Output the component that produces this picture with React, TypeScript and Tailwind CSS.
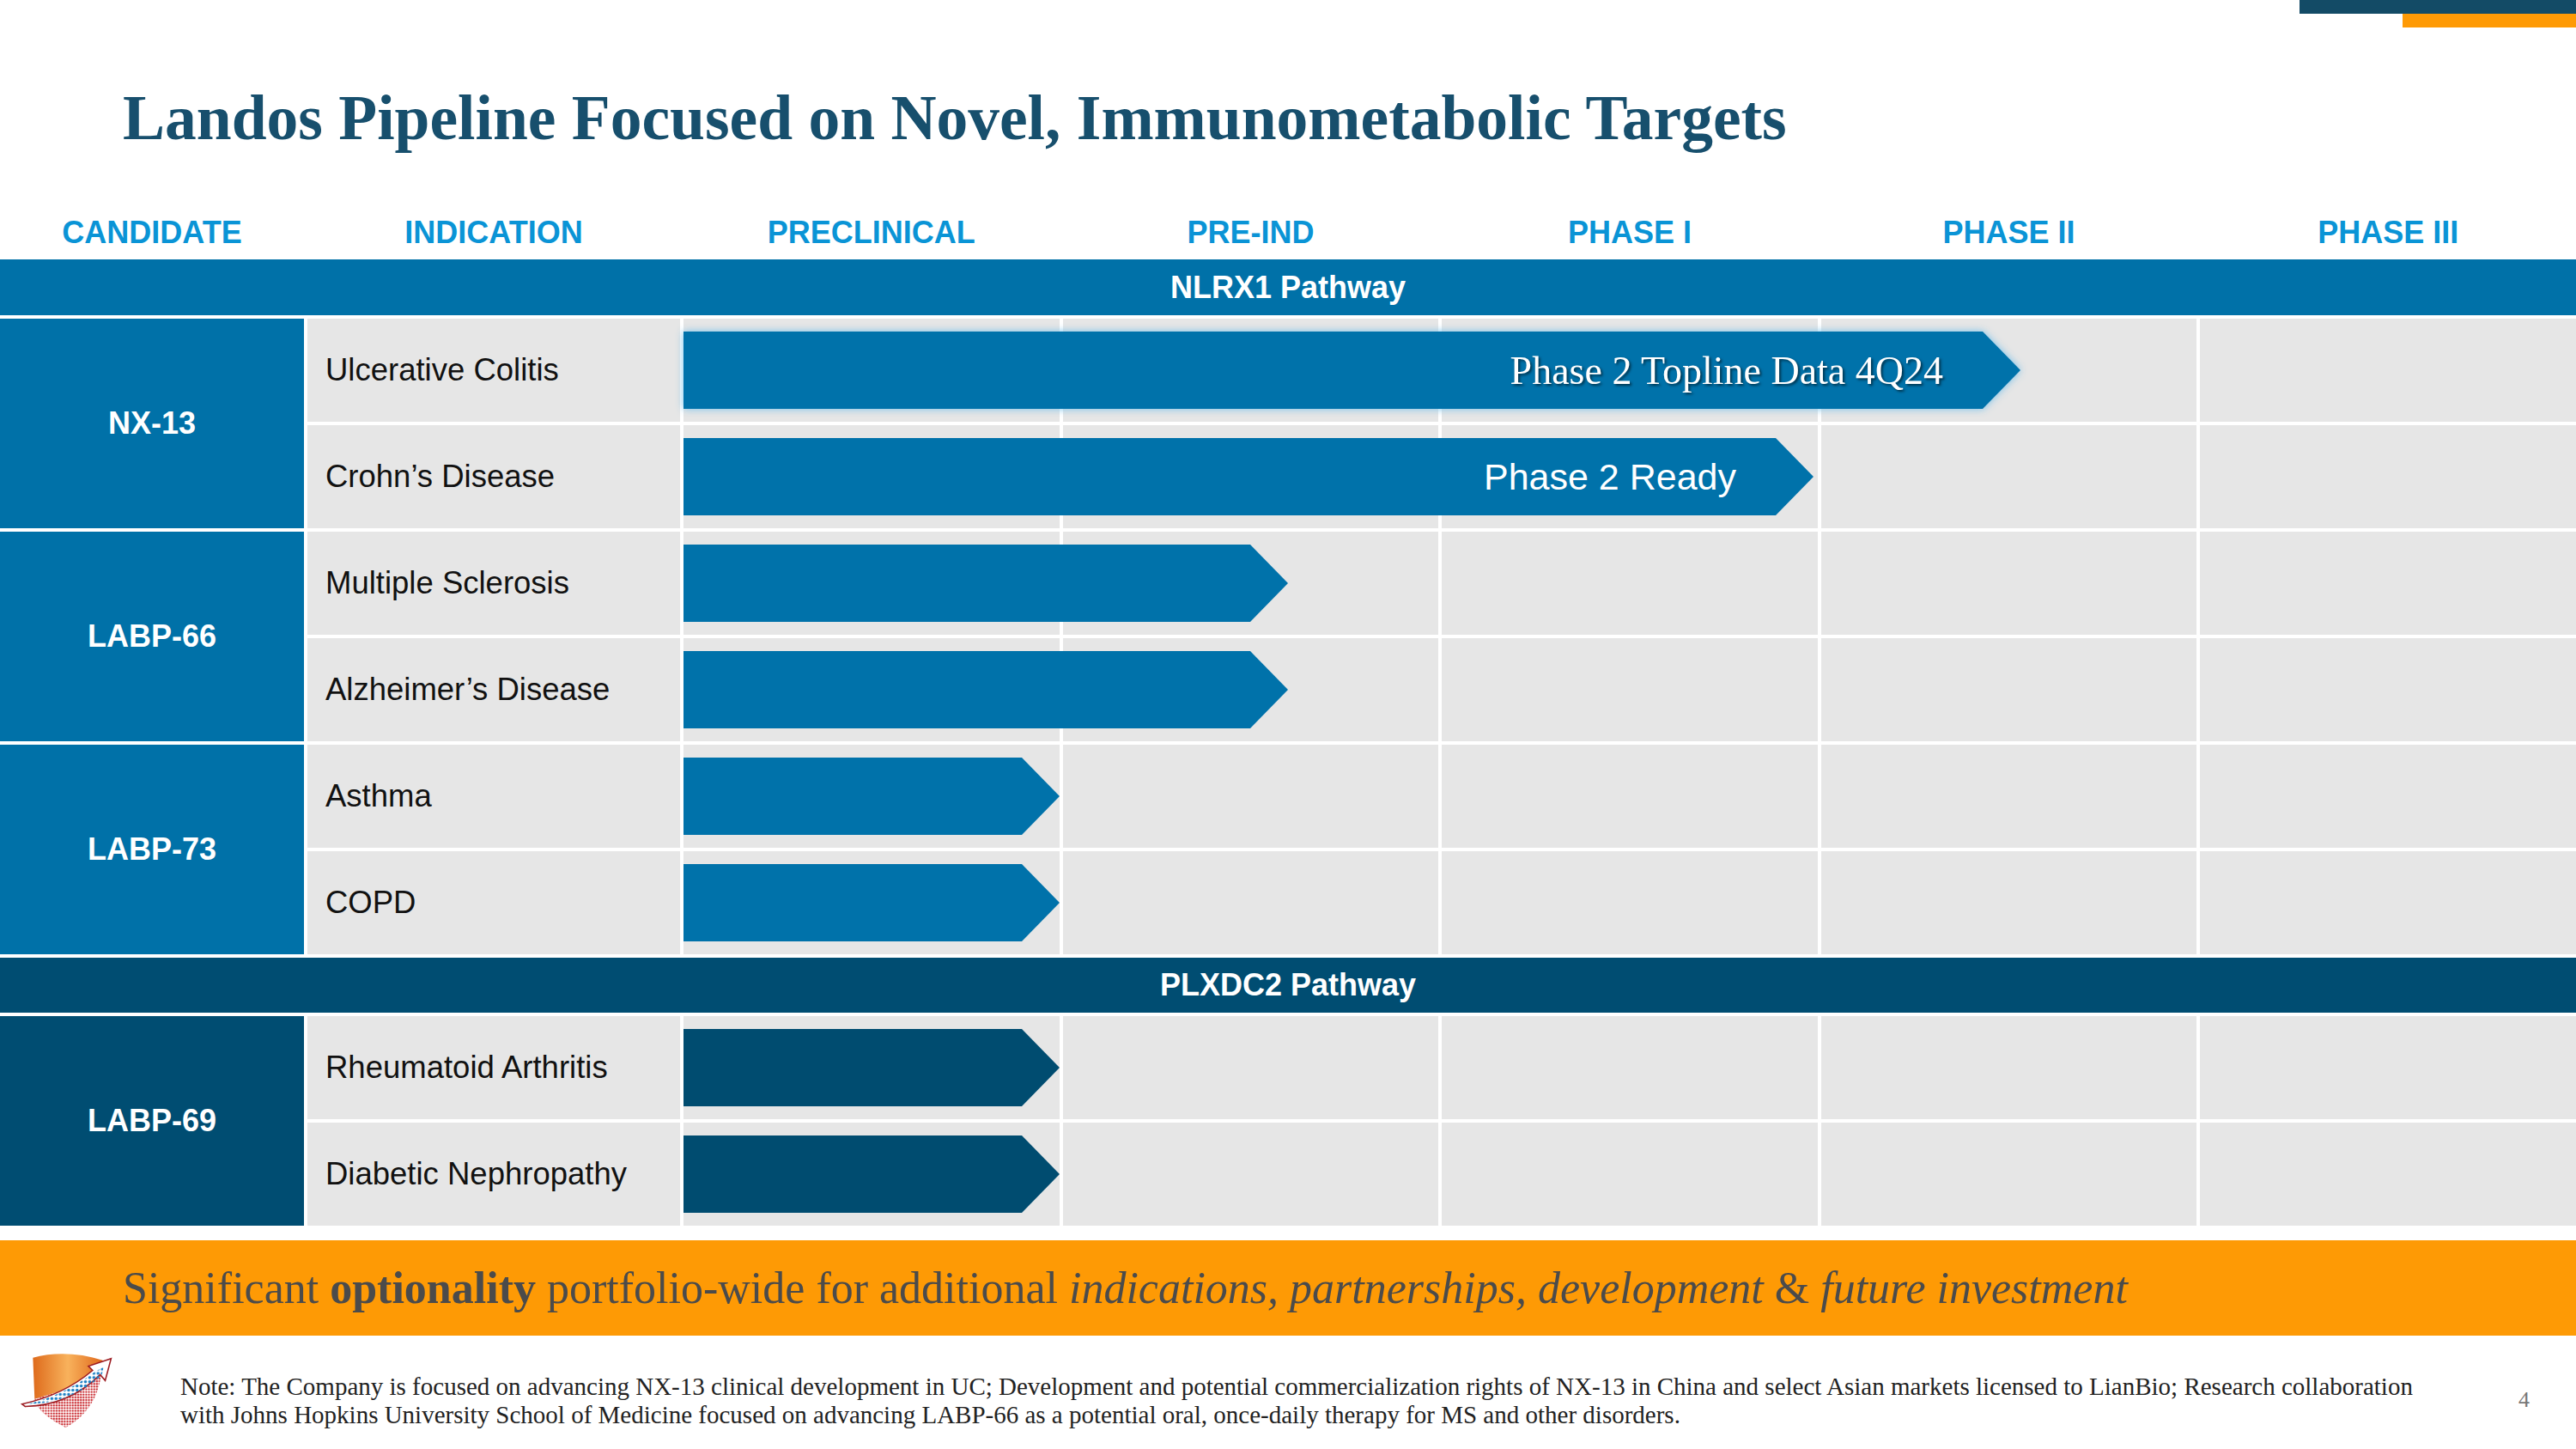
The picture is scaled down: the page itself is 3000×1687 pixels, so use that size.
import React from "react";

type Row = {
  name: string;
  arrow: number; // arrow width in px, measured from the preclinical column start
  label?: string;
  serif?: boolean;
  glow?: boolean;
};

type Group = {
  id: string;
  dark?: boolean;
  rows: Row[];
};

const PHASES = ["PRECLINICAL", "PRE-IND", "PHASE I", "PHASE II", "PHASE III"];

// written out in full so tailwind picks them up
const PHASE_COLS = ["col-start-2", "col-start-3", "col-start-4", "col-start-5", "col-start-6"];

const NLRX1: Group[] = [
  {
    id: "NX-13",
    rows: [
      { name: "Ulcerative Colitis", arrow: 1557, label: "Phase 2 Topline Data 4Q24", serif: true, glow: true },
      { name: "Crohn\u2019s Disease", arrow: 1316, label: "Phase 2 Ready" },
    ],
  },
  {
    id: "LABP-66",
    rows: [
      { name: "Multiple Sclerosis", arrow: 704 },
      { name: "Alzheimer\u2019s Disease", arrow: 704 },
    ],
  },
  {
    id: "LABP-73",
    rows: [
      { name: "Asthma", arrow: 438 },
      { name: "COPD", arrow: 438 },
    ],
  },
];

const PLXDC2: Group[] = [
  {
    id: "LABP-69",
    dark: true,
    rows: [
      { name: "Rheumatoid Arthritis", arrow: 438 },
      { name: "Diabetic Nephropathy", arrow: 438 },
    ],
  },
];

function Arrow({ row, dark }: { row: Row; dark?: boolean }) {
  return (
    <div
      className={row.glow ? "drop-shadow-[0_0_5px_rgba(110,190,235,0.95)]" : ""}
      style={{ width: row.arrow }}
    >
      <div
        className={`flex h-[90px] items-center justify-end pr-[90px] text-white [clip-path:polygon(0_0,calc(100%-44px)_0,100%_50%,calc(100%-44px)_100%,0_100%)] ${
          dark ? "bg-[#004c70]" : "bg-[#0072aa]"
        }`}
      >
        {row.label &&
          (row.serif ? (
            <span className="font-['Liberation_Serif',serif] text-[46px] [text-shadow:2px_2px_3px_rgba(0,0,0,0.55)]">
              {row.label}
            </span>
          ) : (
            <span className="text-[43px]">{row.label}</span>
          ))}
      </div>
    </div>
  );
}

function GroupBlock({ group }: { group: Group }) {
  return (
    <div className="flex gap-[4px]">
      <div
        className={`flex w-[354px] shrink-0 items-center justify-center text-[36px] font-bold text-white ${
          group.dark ? "bg-[#004d72]" : "bg-[#0071a8]"
        }`}
      >
        {group.id}
      </div>
      <div className="flex flex-1 flex-col gap-[4px]">
        {group.rows.map((row) => (
          <div key={row.name} className="grid h-[120px] grid-cols-[434px_repeat(5,1fr)] gap-x-[4px]">
            <div className="col-start-1 row-start-1 flex items-center bg-[#e6e6e6] pl-[21px] text-[36.5px] text-[#111]">
              {row.name}
            </div>
            {PHASE_COLS.map((c) => (
              <div key={c} className={`${c} row-start-1 bg-[#e6e6e6]`} />
            ))}
            <div className="col-start-2 col-end-7 row-start-1 flex items-center">
              <Arrow row={row} dark={group.dark} />
            </div>
          </div>
        ))}
      </div>
    </div>
  );
}

function Band({ title, dark }: { title: string; dark?: boolean }) {
  return (
    <div
      className={`flex items-center justify-center text-[36px] font-bold text-white ${
        dark ? "h-[64px] bg-[#004d72]" : "h-[65px] bg-[#0071a8]"
      }`}
    >
      {title}
    </div>
  );
}

function Logo() {
  return (
    <svg width="109" height="93" viewBox="0 0 110 95">
      <defs>
        <linearGradient id="lgOrange" x1="0" y1="0" x2="1" y2="0">
          <stop offset="0" stopColor="#de6b1c" />
          <stop offset="0.5" stopColor="#f8b25c" />
          <stop offset="1" stopColor="#e0691c" />
        </linearGradient>
        <pattern id="redDots" width="3.2" height="3.2" patternUnits="userSpaceOnUse">
          <circle cx="1.6" cy="1.6" r="1.25" fill="#c9282e" />
        </pattern>
        <pattern id="blueDots" width="5" height="5" patternUnits="userSpaceOnUse">
          <circle cx="2.5" cy="2.5" r="1.8" fill="#1a7fc4" />
        </pattern>
      </defs>
      <path d="M15 9 C40 2 70 3 98 12 L96 30 C70 42 45 50 17 58 Z" fill="url(#lgOrange)" />
      <path d="M17 58 C45 50 70 42 96 30 C92 60 76 80 54 92 C35 82 20 72 17 58 Z" fill="url(#redDots)" />
      <path
        d="M2 64 C30 58 60 46 86 24 L81 19 L108 10 L101 36 L95 29 C70 54 40 66 6 67 Z"
        fill="#fff"
        stroke="#9c1c22"
        strokeWidth="1.6"
      />
      <path d="M8 64 C34 58 62 46 88 26 L99 20 L97 30 C70 54 40 64 8 64 Z" fill="url(#blueDots)" />
    </svg>
  );
}

export default function App() {
  return (
    <main className="flex h-[1687px] w-[3000px] flex-col overflow-hidden bg-white font-['Liberation_Sans',Arial,sans-serif]">
      <div className="flex flex-col items-end">
        <div className="h-[16px] w-[322px] bg-[#134b66]" />
        <div className="h-[16px] w-[202px] bg-[#fe9a05]" />
      </div>

      <h1 className="mt-[66px] h-[80px] pl-[143px] font-['Liberation_Serif',serif] text-[73.5px] leading-[80px] font-bold text-[#174f6d]">
        Landos Pipeline Focused on Novel, Immunometabolic Targets
      </h1>

      <div className="mt-[62px] grid h-[62px] grid-cols-[354px_434px_repeat(5,1fr)] items-center gap-x-[4px] text-center text-[36px] font-bold text-[#0a94d6]">
        <div>CANDIDATE</div>
        <div>INDICATION</div>
        {PHASES.map((p) => (
          <div key={p}>{p}</div>
        ))}
      </div>

      <div className="flex flex-col gap-[4px]">
        <Band title="NLRX1 Pathway" />
        {NLRX1.map((g) => (
          <GroupBlock key={g.id} group={g} />
        ))}
        <Band title="PLXDC2 Pathway" dark />
        {PLXDC2.map((g) => (
          <GroupBlock key={g.id} group={g} />
        ))}
      </div>

      <div className="mt-[17px] flex h-[111px] items-center bg-[#fe9a05] pl-[143px] font-['Liberation_Serif',serif] text-[52px] whitespace-nowrap text-[#4b4b4b]">
        Significant&nbsp;<b>optionality</b>&nbsp;portfolio-wide for additional&nbsp;
        <i>indications, partnerships, development</i>&nbsp;&amp;&nbsp;<i>future investment</i>
      </div>

      <div className="flex items-start pt-[17px]">
        <div className="ml-[23px]">
          <Logo />
        </div>
        <p className="mt-[26px] ml-[78px] font-['Liberation_Serif',serif] text-[29px] leading-[33px] whitespace-nowrap text-[#222]">
          Note: The Company is focused on advancing NX-13 clinical development in UC; Development and potential
          commercialization rights of NX-13 in China and select Asian markets licensed to LianBio; Research collaboration
          <br />
          with Johns Hopkins University School of Medicine focused on advancing LABP-66 as a potential oral, once-daily
          therapy for MS and other disorders.
        </p>
        <div className="mt-[38px] mr-[54px] ml-auto font-['Liberation_Serif',serif] text-[26px] text-[#777]">4</div>
      </div>
    </main>
  );
}
